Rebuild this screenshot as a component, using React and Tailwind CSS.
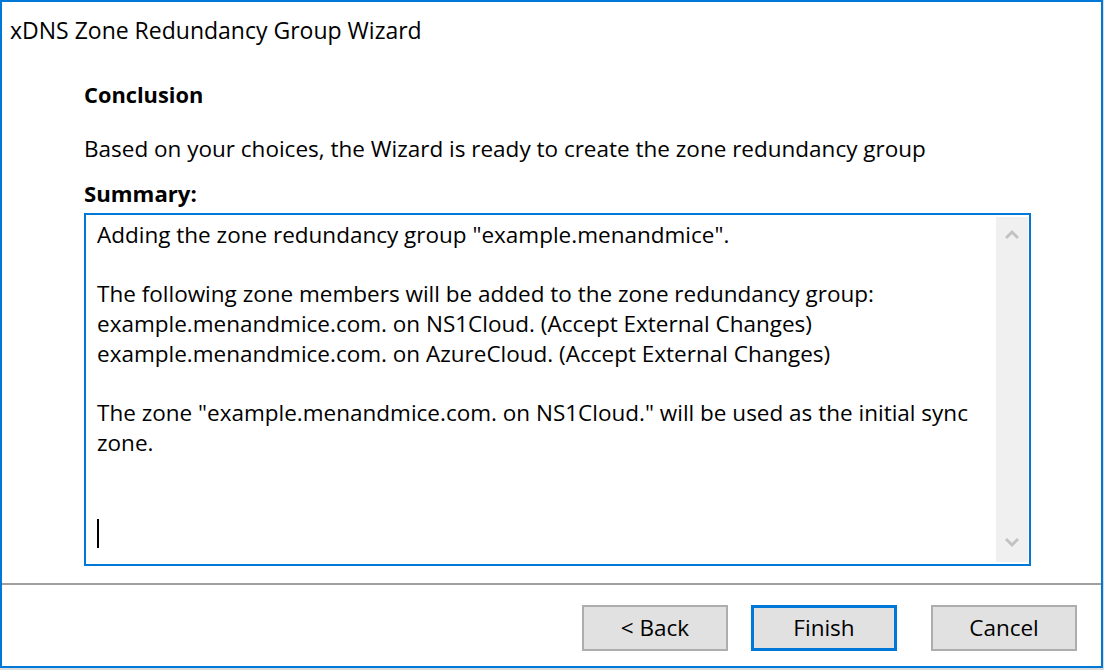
import React from "react";

const summaryLines = [
  'Adding the zone redundancy group "example.menandmice".',
  "",
  "The following zone members will be added to the zone redundancy group:",
  "example.menandmice.com. on NS1Cloud. (Accept External Changes)",
  "example.menandmice.com. on AzureCloud. (Accept External Changes)",
  "",
  'The zone "example.menandmice.com. on NS1Cloud." will be used as the initial sync',
  "zone.",
  "",
  "",
];

function Chevron({ down }) {
  return (
    <svg width="14" height="12" viewBox="0 0 14 12" className="block">
      <path
        d={down ? "M1 3 L7 9 L13 3" : "M1 9 L7 3 L13 9"}
        fill="none"
        stroke="#c2c2c2"
        strokeWidth="3"
      />
    </svg>
  );
}

function Button({ children, primary }) {
  return (
    <button
      className={
        primary
          ? "w-[146px] h-[46px] bg-[#e1e1e1] border-[3px] border-[#0078d7] text-black leading-none"
          : "w-[146px] h-[46px] bg-[#e1e1e1] border-2 border-[#adadad] text-black leading-none"
      }
    >
      {children}
    </button>
  );
}

export default function App() {
  return (
    <div
      className="w-[1104px] h-[670px] bg-[#dcdcdc] text-[22.5px] text-black"
      style={{ fontFamily: '"Open Sans", "Noto Sans", sans-serif' }}
    >
      <div className="w-[1103px] h-[668px] bg-white border-2 border-[#0078d7] flex flex-col">
        <div className="pl-[8px] pt-[13px] h-[60px] leading-[30px] text-[23px]">
          xDNS Zone Redundancy Group Wizard
        </div>

        <div className="pl-[82px] pr-[70px] flex flex-col leading-[30px]">
          <div className="font-bold text-[21.8px] mt-[18px]">Conclusion</div>
          <div className="mt-[24px]">
            Based on your choices, the Wizard is ready to create the zone redundancy group
          </div>
          <div className="font-bold text-[22.2px] mt-[15px]">Summary:</div>
          <div className="mt-[4px] w-[947px] h-[353px] border-2 border-[#0078d7] flex">
            <div className="flex-1 pl-[11px] pt-[5px] leading-[29.7px]">
              {summaryLines.map((l, i) => (
                <div key={i} className="whitespace-pre h-[29.7px]">
                  {l || " "}
                </div>
              ))}
              <div className="h-[29.7px] flex items-center pt-[4px]">
                <div className="w-[2px] h-[29px] bg-black" />
              </div>
            </div>
            <div className="w-[32px] mt-[2px] mb-[2px] mr-[1px] bg-[#f0f0f0] flex flex-col items-center justify-between pt-[12px] pb-[14px]">
              <Chevron />
              <Chevron down />
            </div>
          </div>
        </div>

        <div className="mt-[17px] h-[2px] bg-[#a0a0a0]" />

        <div className="flex pl-[580px] pt-[20px]">
          <Button>&lt; Back</Button>
          <div className="ml-[23px]">
            <Button primary>Finish</Button>
          </div>
          <div className="ml-[34px]">
            <Button>Cancel</Button>
          </div>
        </div>
      </div>
    </div>
  );
}
